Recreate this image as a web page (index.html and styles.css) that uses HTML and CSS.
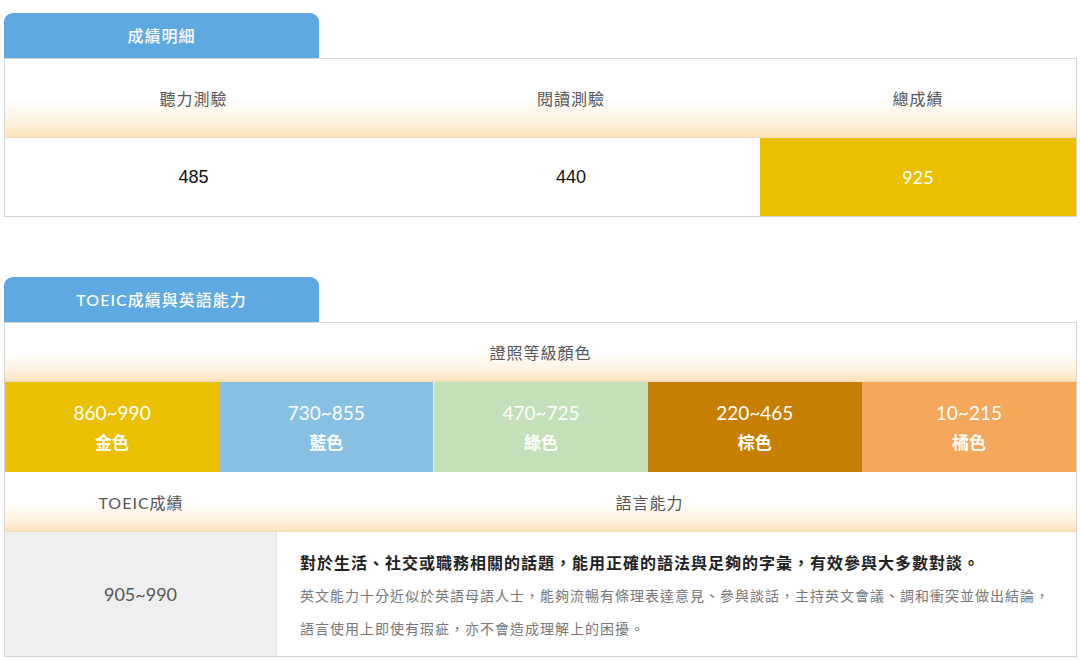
FILE: index.html
```html
<html>
    <head>
        <meta charset="utf-8">
        <link rel="stylesheet" href="styles.css">
    </head>
    <body>
        <div class="page">
            <section class="panel">
                <div class="tab">成績明細</div>
                <div class="board">
                    <div class="head-row score-cols">
                        <div class="cell">聽力測驗</div>
                        <div class="cell">閱讀測驗</div>
                        <div class="cell">總成績</div>
                    </div>
                    <div class="value-row score-cols">
                        <div class="cell">485</div>
                        <div class="cell">440</div>
                        <div class="cell total">925</div>
                    </div>
                </div>
            </section>

            <section class="panel">
                <div class="tab">TOEIC成績與英語能力</div>
                <div class="board">
                    <div class="head-row single">
                        <div class="cell">證照等級顏色</div>
                    </div>
                    <div class="colors">
                        <div class="swatch gold"><span>860~990</span><b>金色</b></div>
                        <div class="swatch blue"><span>730~855</span><b>藍色</b></div>
                        <div class="swatch green"><span>470~725</span><b>綠色</b></div>
                        <div class="swatch brown"><span>220~465</span><b>棕色</b></div>
                        <div class="swatch orange"><span>10~215</span><b>橘色</b></div>
                    </div>
                    <div class="head-row level-cols">
                        <div class="cell latin">TOEIC成績</div>
                        <div class="cell ability-head">語言能力</div>
                    </div>
                    <div class="level-row level-cols">
                        <div class="range">905~990</div>
                        <div class="desc">
                            <p class="lead">對於生活、社交或職務相關的話題，能用正確的語法與足夠的字彙，有效參與大多數對談。</p>
                            <p>英文能力十分近似於英語母語人士，能夠流暢有條理表達意見、參與談話，主持英文會議、調和衝突並做出結論，語言使用上即使有瑕疵，亦不會造成理解上的困擾。</p>
                        </div>
                    </div>
                </div>
            </section>
        </div>
    </body>
</html>
```

FILE: styles.css
```css
* {
    box-sizing: border-box;
}

body {
    margin: 0;
    background-color: #fff;
    font-family: "Noto Sans CJK TC", sans-serif;
    color: #555;
}

.page {
    padding: 13px 3px 0 4px;
}

.panel + .panel {
    margin-top: 60px;
}

.tab {
    width: 315px;
    height: 45px;
    line-height: 45px;
    text-align: center;
    background-color: #5ea9e1;
    color: #fff;
    border-radius: 9px 9px 0 0;
    font-family: Lato, "Noto Sans CJK TC", sans-serif;
    font-size: 16px;
    font-weight: 500;
    letter-spacing: 1px;
}

.board {
    border: 1px solid #d6d6d6;
}

.cell {
    display: flex;
    align-items: center;
    justify-content: center;
}

.head-row {
    display: grid;
    height: 79px;
    font-size: 16px;
    letter-spacing: 1px;
    color: #555;
    background: linear-gradient(to bottom, #fff 50%, #fef2de 82%, #fde3bc 100%);
    border-bottom: 1px solid #efdcbf;
}

.head-row.single {
    height: 59px;
}

.score-cols {
    display: grid;
    grid-template-columns: 377px 378px 1fr;
}

.value-row {
    height: 78px;
    font-family: "Liberation Sans", sans-serif;
    font-size: 18px;
    color: #111;
}

.value-row .total {
    background-color: #ebc000;
    color: #fff;
    font-family: Lato, sans-serif;
}

.colors {
    display: grid;
    grid-template-columns: repeat(5, 1fr);
    height: 90px;
}

.swatch {
    display: flex;
    flex-direction: column;
    align-items: center;
    justify-content: center;
    color: #fff;
    gap: 3px;
}

.swatch span {
    font-family: Lato, sans-serif;
    font-size: 19px;
    line-height: 26px;
}

.swatch b {
    font-size: 17px;
    line-height: 26px;
    font-weight: 600;
}

.gold {
    background-color: #ebc000;
}

.blue {
    background-color: #88c0e3;
}

.green {
    background-color: #c4e0b9;
    border-left: 1px solid #e6f0e2;
}

.brown {
    background-color: #c67f00;
}

.orange {
    background-color: #f4a85c;
}

.level-cols {
    display: grid;
    grid-template-columns: 272px 1fr;
}

.colors + .head-row {
    height: 60px;
}

.latin,
.range {
    font-family: Lato, "Noto Sans CJK TC", sans-serif;
}

.ability-head {
    padding-right: 54px;
}

.range {
    display: flex;
    align-items: center;
    justify-content: center;
    background-color: #efefef;
    border-right: 1px solid #e4e4e4;
    font-size: 18px;
    color: #555;
}

.desc {
    padding: 14px 14px 11px 23px;
}

.desc p {
    margin: 0;
    font-size: 14px;
    line-height: 33px;
    letter-spacing: 1px;
    color: #777;
}

.desc p.lead {
    font-size: 16px;
    font-weight: 700;
    color: #222;
}
```
